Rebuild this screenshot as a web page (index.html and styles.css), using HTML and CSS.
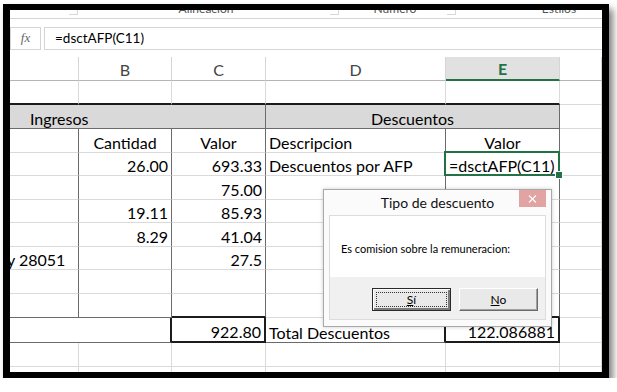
FILE: index.html
```html
<!DOCTYPE html>
<html>

<head>
  <title>Tipo de descuento</title>
  <meta charset="UTF-8">
  <link rel="stylesheet" href="styles.css">
</head>

<body>
  <div class="frame">
    <!-- cinta (solo se ven los nombres de grupo) -->
    <div class="ribbon">
      <div class="group g1"><span class="glabel"></span><span class="launcher"></span></div>
      <div class="group g2"><span class="glabel">Alineación</span><span class="launcher"></span></div>
      <div class="group g3"><span class="glabel">Número</span><span class="launcher"></span></div>
      <div class="group g4"><span class="glabel">Estilos</span></div>
    </div>

    <div class="fbar">
      <div class="fx">fx</div>
      <div class="finput">=dsctAFP(C11)</div>
    </div>

    <div class="sheet">
      <div class="c h"></div>
      <div class="c h">B</div>
      <div class="c h">C</div>
      <div class="c h">D</div>
      <div class="c h hsel">E</div>
      <div class="c h"></div>

      <div class="c bk"></div>
      <div class="c bk"></div>
      <div class="c bk"></div>
      <div class="c bk"></div>
      <div class="c bk"></div>
      <div class="c"></div>

      <div class="c s3 band rd bd pl">Ingresos</div>
      <div class="c s2 band rd bd ctr">Descuentos</div>
      <div class="c"></div>

      <div class="c rd"></div>
      <div class="c rd ctr">Cantidad</div>
      <div class="c rd ctr">Valor</div>
      <div class="c rd">Descripcion</div>
      <div class="c rd ctr">Valor</div>
      <div class="c"></div>

      <div class="c rd"></div>
      <div class="c rd num">26.00</div>
      <div class="c rd num">693.33</div>
      <div class="c rd">Descuentos por AFP</div>
      <div class="c rd sel">=dsctAFP(C11)</div>
      <div class="c"></div>

      <div class="c rd"></div>
      <div class="c rd"></div>
      <div class="c rd num">75.00</div>
      <div class="c rd"></div>
      <div class="c rd"></div>
      <div class="c"></div>

      <div class="c rd"></div>
      <div class="c rd num">19.11</div>
      <div class="c rd num">85.93</div>
      <div class="c rd"></div>
      <div class="c rd"></div>
      <div class="c"></div>

      <div class="c rd"></div>
      <div class="c rd num">8.29</div>
      <div class="c rd num">41.04</div>
      <div class="c rd"></div>
      <div class="c rd"></div>
      <div class="c"></div>

      <div class="c rd cut">y 28051</div>
      <div class="c rd"></div>
      <div class="c rd num">27.5</div>
      <div class="c rd"></div>
      <div class="c rd"></div>
      <div class="c"></div>

      <div class="c rd"></div>
      <div class="c rd"></div>
      <div class="c rd"></div>
      <div class="c rd"></div>
      <div class="c rd"></div>
      <div class="c"></div>

      <div class="c rd bd"></div>
      <div class="c rd bd"></div>
      <div class="c rd bk"></div>
      <div class="c rd"></div>
      <div class="c rd bk"></div>
      <div class="c"></div>

      <div class="c s2 rk bd"></div>
      <div class="c rk bk num">922.80</div>
      <div class="c rk bd">Total Descuentos</div>
      <div class="c rk bk num">122.086881</div>
      <div class="c"></div>

      <div class="c"></div>
      <div class="c"></div>
      <div class="c"></div>
      <div class="c"></div>
      <div class="c"></div>
      <div class="c"></div>

      <div class="c"></div>
      <div class="c"></div>
      <div class="c"></div>
      <div class="c"></div>
      <div class="c"></div>
      <div class="c"></div>
    </div>

    <div class="dialog">
      <div class="dtitle">
        Tipo de descuento
        <span class="close">
          <svg width="9" height="8" viewBox="0 0 9 8"><path d="M1 0.5L8 7.5M8 0.5L1 7.5" stroke="#fff" stroke-width="1.1" fill="none"/></svg>
        </span>
      </div>
      <div class="dbody">
        <div class="dmsg">Es comision sobre la remuneracion:</div>
        <div class="dbtns">
          <button class="btn def"><u>S</u>í</button>
          <button class="btn"><u>N</u>o</button>
        </div>
      </div>
    </div>
  </div>
</body>

</html>
```

FILE: styles.css
```css
* {
  padding: 0;
  margin: 0;
  box-sizing: border-box;
}

body {
  background-color: #fff;
  font-family: Lato, "Liberation Sans", sans-serif;
}

.frame {
  position: relative;
  width: 606px;
  height: 374px;
  margin: 4px 0 0 3px;
  border: 6px solid #000;
  border-left-width: 7px;
  border-right-width: 7px;
  background-color: #fff;
  box-shadow: 4px 5px 7px rgba(0, 0, 0, 0.5);
  overflow: hidden;
}

/* cinta */
.ribbon {
  display: flex;
  height: 9px;
  border-bottom: 1px solid #d5d5d5;
  overflow: hidden;
}

.group {
  display: flex;
  flex-shrink: 0;
}

.g1 { width: 72px; }
.g2 { width: 261px; }
.g3 { width: 117px; }
.g4 { width: 198px; }

.glabel {
  flex: 1;
  text-align: center;
  font-size: 12px;
  line-height: 12px;
  margin-top: -7px;
  color: #555;
}

.launcher {
  width: 9px;
  height: 9px;
  margin: -4px 4px 0 0;
  border-right: 1px solid #d8d8d8;
  border-bottom: 1px solid #d8d8d8;
}

/* barra de formulas */
.fbar {
  display: flex;
  gap: 3px;
  height: 23px;
  margin-top: 8px;
}

.fx {
  width: 31px;
  border: 1px solid #d5d5d5;
  font-family: "Liberation Serif", serif;
  font-style: italic;
  font-size: 13px;
  color: #666;
  text-align: center;
  line-height: 20px;
}

.finput {
  flex: 1;
  border: 1px solid #d5d5d5;
  border-right: none;
  padding-left: 10px;
  font-size: 13.5px;
  line-height: 21px;
  color: #000;
}

/* hoja */
.sheet {
  display: grid;
  grid-template-columns: 69px 93px 94px 180px 114px 42px;
  grid-template-rows: 24px 24px 24px 24px 23px 24px 23px 24px 23px 24px 24px 25px 24px 24px;
  margin-top: 7px;
}

.c {
  display: flex;
  align-items: flex-end;
  padding: 0 3px;
  border-right: 1px solid #dadada;
  border-bottom: 1px solid #dadada;
  font-size: 16px;
  color: #000;
  white-space: nowrap;
  overflow: hidden;
}

.h {
  justify-content: center;
  padding-bottom: 1px;
  border-right-color: #d5d5d5;
  border-bottom-color: #b5b5b5;
  color: #444;
}

.hsel {
  background-color: #e1e1e1;
  color: #217346;
  font-weight: bold;
  border-bottom: 2px solid #217346;
}

.s2 { grid-column: span 2; }
.s3 { grid-column: span 3; }

.band { background-color: #d9d9d9; }
.pl { padding-left: 20px; }
.ctr { justify-content: center; }
.num { justify-content: flex-end; }

.cut {
  padding-left: 0;
  text-indent: -3px;
}

.rd { border-right-color: #6b6b6b; }
.bd { border-bottom-color: #6b6b6b; }

.rk {
  border-right: 2px solid #1c1c1c;
}

.bk {
  border-bottom: 2px solid #1c1c1c;
}

.sel {
  position: relative;
  overflow: visible;
}

.sel::after {
  content: "";
  position: absolute;
  left: -2px;
  top: -2px;
  right: -1px;
  bottom: -1px;
  border: 2px solid #217346;
}

.sel::before {
  content: "";
  position: absolute;
  right: -4px;
  bottom: -4px;
  width: 6px;
  height: 6px;
  background-color: #217346;
  border: 1px solid #fff;
  z-index: 2;
}

/* dialogo */
.dialog {
  position: absolute;
  left: 313px;
  top: 179px;
  width: 229px;
  height: 138px;
  padding: 0 5px 6px;
  border: 1px solid #a9a9a9;
  background-color: #fbfbfb;
  box-shadow: 0 0 4px rgba(0, 0, 0, 0.2);
  display: flex;
  flex-direction: column;
}

.dtitle {
  position: relative;
  height: 25px;
  text-align: center;
  font-size: 14px;
  line-height: 25px;
  color: #111;
}

.close {
  position: absolute;
  top: 0;
  right: 0;
  width: 27px;
  height: 17px;
  background-color: #e2a3a3;
  display: flex;
  align-items: center;
  justify-content: center;
}

.dbody {
  flex: 1;
  border: 1px solid #dcdcdc;
  display: flex;
  flex-direction: column;
}

.dmsg {
  height: 61px;
  padding: 26px 0 0 11px;
  background-color: #fff;
  font-size: 11px;
  line-height: 14px;
  color: #000;
}

.dbtns {
  flex: 1;
  background-color: #f0f0f0;
  display: flex;
  justify-content: flex-end;
  gap: 8px;
  padding: 11px 7px 0 0;
}

.btn {
  position: relative;
  width: 79px;
  height: 23px;
  border: 1px solid;
  border-color: #fff #6b6b6b #6b6b6b #fff;
  box-shadow: inset -1px -1px #a0a0a0;
  background-color: #e9e9e9;
  font-family: Lato, "Liberation Sans", sans-serif;
  font-size: 12px;
  color: #000;
}

.def {
  border-color: #2a2a2a;
  box-shadow: inset 1px 1px #fff, inset -2px -2px #7a7a7a;
}

.def::after {
  content: "";
  position: absolute;
  left: 3px;
  top: 3px;
  right: 3px;
  bottom: 3px;
  border: 1px dotted #333;
}
```
